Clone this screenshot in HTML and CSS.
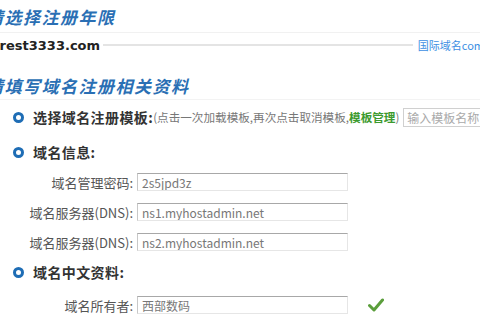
FILE: index.html
```html
<!doctype html>
<html lang="zh-CN">
  <head>
    <meta charset="UTF-8" />
    <title>域名注册</title>
    <link rel="stylesheet" href="styles.css">
  </head>
  <body>
    <div class="page">
      <div class="sec-title">请选择注册年限</div>

      <div class="domain-row">
        <span class="domain-name">forest3333.com</span>
        <span class="domain-line"></span>
        <a class="domain-type" href="#">国际域名com</a>
      </div>

      <div class="sec-title sec-title-2">请填写域名注册相关资料</div>

      <div class="opt-row first">
        <span class="dot"></span>
        <span class="opt-label">选择域名注册模板:</span>
        <span class="opt-hint">(点击一次加载模板,再次点击取消模板,<b class="green">模板管理</b>)</span>
        <input class="tpl-input" type="text" placeholder="输入模板名称" />
      </div>

      <div class="opt-row">
        <span class="dot"></span>
        <span class="opt-label">域名信息:</span>
      </div>

      <div class="field">
        <label>域名管理密码:</label>
        <input class="txt" type="text" value="2s5jpd3z" />
      </div>
      <div class="field">
        <label>域名服务器(DNS):</label>
        <input class="txt" type="text" value="ns1.myhostadmin.net" />
      </div>
      <div class="field">
        <label>域名服务器(DNS):</label>
        <input class="txt" type="text" value="ns2.myhostadmin.net" />
      </div>

      <div class="opt-row tight">
        <span class="dot"></span>
        <span class="opt-label">域名中文资料:</span>
      </div>

      <div class="field last">
        <label>域名所有者:</label>
        <input class="txt" type="text" value="西部数码" />
        <svg class="ok" width="16" height="14" viewBox="0 0 16 14">
          <path d="M1.5 7.5 L6 12 L14.5 2" fill="none" stroke="#5b9e3c" stroke-width="3" stroke-linecap="round" stroke-linejoin="round" />
        </svg>
      </div>
    </div>
  </body>
</html>
```

FILE: styles.css
```css
* {
  box-sizing: border-box;
}

body {
  margin: 0;
  background-color: #fff;
  font-family: 'Noto Sans CJK SC', 'DejaVu Sans', sans-serif;
  color: #333;
  overflow: hidden;
}

.page {
  width: 480px;
  height: 320px;
  overflow: hidden;
}

.sec-title {
  height: 33px;
  line-height: 34px;
  margin-left: -14px;
  font-size: 17px;
  font-weight: bold;
  font-style: italic;
  letter-spacing: 1.5px;
  color: #2a6fb4;
  border-bottom: 1px solid #f1f1f1;
  white-space: nowrap;
}

.sec-title-2 {
  height: 26px;
  line-height: 24px;
  margin-top: 17px;
  border-bottom: 1px solid #f3f3f3;
}

.domain-row {
  display: flex;
  align-items: center;
  height: 24px;
  white-space: nowrap;
}

.domain-name {
  margin-left: -15px;
  font-family: 'DejaVu Sans', sans-serif;
  font-size: 13px;
  font-weight: bold;
  color: #222;
}

.domain-line {
  flex: 1;
  height: 2px;
  margin: 0 5px 0 3px;
  background-color: #e4e4e4;
}

.domain-type {
  font-size: 11px;
  color: #3d8fe3;
  text-decoration: none;
  margin-right: -4px;
}

.opt-row {
  display: flex;
  align-items: center;
  height: 30px;
  margin-top: 5px;
  padding-left: 13px;
  white-space: nowrap;
}

.opt-row.first {
  margin-top: 2px;
}

.opt-row.tight {
  margin-top: 0;
}

.dot {
  width: 11px;
  height: 11px;
  border: 3px solid #1e6db5;
  border-radius: 50%;
  margin-right: 9px;
  flex-shrink: 0;
}

.opt-label {
  font-size: 14px;
  font-weight: bold;
  letter-spacing: 0.4px;
  color: #333;
}

.opt-hint {
  font-size: 11.6px;
  color: #777;
}

.green {
  color: #3c9a2e;
}

.tpl-input {
  margin-left: 4px;
  width: 110px;
  height: 19px;
  padding: 0 3px;
  border: 1px solid #d0d0d0;
  font-family: inherit;
  font-size: 12px;
  color: #555;
  flex-shrink: 0;
}

.tpl-input::placeholder {
  color: #aaa;
}

.field {
  display: flex;
  align-items: center;
  height: 30px;
}

.field.last {
  margin-top: 3px;
}

.field label {
  width: 133px;
  text-align: right;
  font-size: 13px;
  color: #555;
  white-space: nowrap;
}

.txt {
  margin-left: 4px;
  width: 211px;
  height: 18px;
  padding: 0 4px;
  border: 1px solid #e6e6e6;
  border-top-color: #a8a8a8;
  border-left-color: #c8c8c8;
  font-family: 'Noto Sans CJK SC', 'DejaVu Sans', sans-serif;
  font-size: 12px;
  color: #777;
}

.ok {
  margin-left: 20px;
}
```
